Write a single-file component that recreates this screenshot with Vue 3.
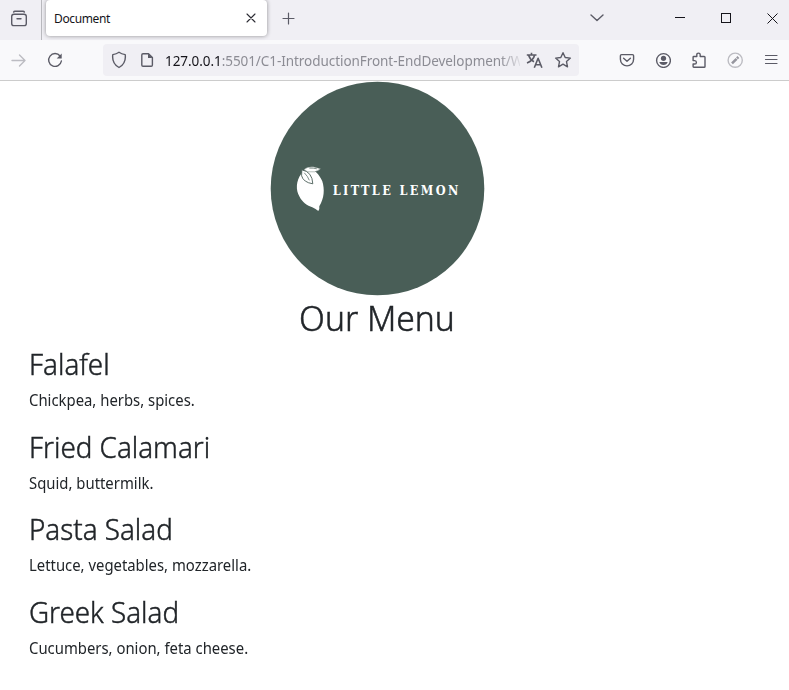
<script setup>
const dishes = [
  { key: 'falafel', name: 'Falafel', text: 'Chickpea, herbs, spices.' },
  { key: 'calamari', name: 'Fried Calamari', text: 'Squid, buttermilk.' },
  { key: 'pasta', name: 'Pasta Salad', text: 'Lettuce, vegetables, mozzarella.' },
  { key: 'greek', name: 'Greek Salad', text: 'Cucumbers, onion, feta cheese.' },
]
</script>

<template>
  <div class="window">
    <header class="tabs">
      <div class="view">
        <svg width="18" height="18" viewBox="0 0 18 18" class="ico">
          <path d="M3.6 2.1Q4 1.2 5 1.2h8q1 0 1.4.9" />
          <rect x="1.7" y="4.2" width="14.6" height="11.4" rx="2.2" />
          <path d="M7 8.8h4" />
        </svg>
      </div>
      <div class="tab">
        <span class="title">Document</span>
        <svg width="10" height="10" viewBox="0 0 10 10" class="ico dark thin"><path d="M1 1l8 8M9 1l-8 8" /></svg>
      </div>
      <svg width="13" height="13" viewBox="0 0 13 13" class="ico plus"><path d="M6.500 1v11M1 6.500h11" /></svg>
      <svg width="14" height="8" viewBox="0 0 14 8" class="ico list"><path d="M1 1l6 5.500L13 1" /></svg>
      <svg width="10" height="10" viewBox="0 0 10 10" class="ico win min" shape-rendering="crispEdges"><path d="M0 4.500h10" /></svg>
      <svg width="10" height="10" viewBox="0 0 10 10" class="ico win max" shape-rendering="crispEdges"><path d="M.5.5h9v9h-9z" /></svg>
      <svg width="11" height="11" viewBox="0 0 11 11" class="ico win"><path d="M.5.5l10 10M10.500.5l-10 10" /></svg>
    </header>

    <nav class="toolbar">
      <svg width="16" height="14" viewBox="0 0 16 14" class="ico faded fwd"><path d="M1 7.500h13M8.500 2L14 7.500l-5.500 5.500" /></svg>
      <svg width="16" height="16" viewBox="0 0 16 16" class="ico reload">
        <path d="M13.100 4A6.400 6.400 0 1 0 14.400 9" />
        <path class="solid" d="M14.700 1.500v5h-5z" />
      </svg>
      <div class="url">
        <svg width="16" height="18" viewBox="0 0 16 18" class="ico shield"><path d="M8 1.300Q10.500 3.200 14.200 3.600C15 9.500 12.500 14 8 16.500C3.500 14 1 9.500 1.800 3.600Q5.500 3.200 8 1.300z" /></svg>
        <svg width="14" height="16" viewBox="0 0 14 16" class="ico page">
          <path d="M3 1.700h5.500l3.900 3.900v7.500q0 1.200-1.200 1.200H3q-1.200 0-1.200-1.200V2.900q0-1.200 1.200-1.200z" />
          <path class="solid" d="M8 1.500v4.600h4.500z" />
        </svg>
        <span class="address"><b>127.0.0.1</b>:5501/C1-IntroductionFront-EndDevelopment/W</span>
        <svg width="17" height="17" viewBox="0 0 17 17" class="ico translate">
          <path d="M.8 3h9.700M5.500.8V3M8.600 3C7.900 6.500 5 9.300 1 11M2.700 3.500C3.800 6.800 6 8.700 8 9.800M8.300 15.700L12.100 6.300L15.900 15.700M9.700 12.800h4.800" />
        </svg>
        <svg width="18" height="18" viewBox="0 0 18 18" class="ico star"><path d="M9 1.700l2.200 4.800 5.200.600-3.900 3.500 1 5.200L9 13.200l-4.500 2.600 1-5.200L1.600 7.100l5.200-.600z" /></svg>
      </div>
      <div class="actions">
        <svg width="16" height="16" viewBox="0 0 16 16" class="ico">
          <path d="M2.600 2.600h10.800q1.200 0 1.200 1.200v3.500a6.600 6.600 0 0 1-13.200 0V3.800q0-1.200 1.200-1.200z" />
          <path d="M4.600 6.200L8 9.300l3.400-3.100" />
        </svg>
        <svg width="16" height="16" viewBox="0 0 16 16" class="ico">
          <circle cx="8.500" cy="8.500" r="6.900" />
          <circle class="solid" cx="8.500" cy="6.300" r="2.600" />
          <path class="solid" d="M4.300 10h8.400q-.9 3-4.200 3t-4.200-3z" />
        </svg>
        <svg width="16" height="16" viewBox="0 0 16 16" class="ico">
          <path d="M2.100 7V5.200q0-.7.700-.7h3V2.800q0-1.700 1.700-1.700t1.700 1.700v1.700h4q.8 0 .8.800v9.100q0 .8-.8.800H2.800q-.7 0-.7-.7v-2.500h1.600q1.700 0 1.700-1.600T3.700 8.600H2.100z" />
        </svg>
        <svg width="16" height="16" viewBox="0 0 16 16" class="ico faded">
          <circle cx="8.200" cy="8.200" r="7.100" />
          <path class="pen" d="M5 11.400l4.600-4.600M10 6.400l1.400-1.400" />
        </svg>
        <svg width="14" height="12" viewBox="0 0 14 12" class="ico menu"><path d="M1.500 1.500h11.500M1.500 5.500h11.500M1.500 9.500h11.500" /></svg>
      </div>
    </nav>

    <main class="content">
      <svg class="logo" width="216" height="216" viewBox="0 0 216 216">
        <circle cx="108.500" cy="107.500" r="106.800" fill="#495e57" />
        <g transform="translate(.3 .3)">
          <path fill="#fff" d="M32 92.500C26.500 100 26.500 109 30 115C33 121 38 124.500 43 126Q46.500 127.500 49 129.800Q50.500 128 50 125C55 117 55.500 108 53 100C50 93 45 88 39 87.500Q34 89 32 92.500z" />
          <path fill="#fff" stroke="#495e57" stroke-width=".4" d="M34.500 88.500Q37.500 85 44 85.500L51.500 87.500Q46 92 38.500 90.500z" />
          <path fill="#fff" stroke="#495e57" stroke-width=".9" d="M32.500 88.500Q43 90.500 43.500 102.500Q34 101 32.300 94.500z" />
          <path fill="none" stroke="#495e57" stroke-width=".7" d="M35 91.500Q38.500 95 40 99M40 86.800Q44 86.500 47.500 87.500" />
        </g>
        <text transform="translate(63.700 113.800) scale(.93 1)" textLength="135" class="brand">LITTLE LEMON</text>
      </svg>
      <h1><span>Our Menu</span></h1>
      <section v-for="dish in dishes" :key="dish.key" class="dish" :class="dish.key">
        <h2>{{ dish.name }}</h2>
        <p>{{ dish.text }}</p>
      </section>
    </main>
  </div>
</template>

<style>
body { margin: 0; background: #fff; overflow: hidden; }
</style>

<style scoped>
.window { width: 789px; height: 690px; overflow: hidden; background: #fff; font-family: "Noto Sans", "Open Sans", sans-serif; color: #212529; }
.ico { display: block; flex: none; fill: none; stroke: #5b5b66; stroke-width: 1.4; stroke-linecap: round; stroke-linejoin: round; }
.ico .solid { fill: #5b5b66; stroke: none; }
.dark { stroke: #2c2c34; }
.thin { stroke-width: 1.1; }
.faded { stroke: #bcbcc2; }
.pen { stroke: #96969e; stroke-width: 2.600; stroke-linecap: butt; }
.tabs { box-sizing: border-box; display: flex; align-items: center; height: 40px; padding-bottom: 4px; background: #f0eff4; }
.view { box-sizing: border-box; display: flex; align-items: center; width: 42px; height: 40px; margin-bottom: -4px; padding: 0 0 3px 10px; border-right: 1px solid #b9b9be; }
.tab { box-sizing: border-box; display: flex; align-items: center; justify-content: space-between; width: 221px; height: 36px; margin-left: 4px; padding: 0 11px 0 8px; background: #fff; border-radius: 4px; box-shadow: 0 0 4px rgba(0, 0, 0, .4); }
.title { font-size: 12px; line-height: 16px; letter-spacing: -.36px; color: #15141a; padding-top: 2px; }
.plus { margin-left: 15px; stroke-width: 1.2; }
.list { margin-left: 295px; }
.win { stroke: #15141a; stroke-width: 1; stroke-linecap: butt; margin-right: 7px; }
.min { margin: 0 36px 0 71px; }
.max { margin-right: 36px; }
.toolbar { box-sizing: border-box; display: flex; align-items: center; height: 41px; background: #f9f9fb; border-bottom: 1px solid #ccc; }
.fwd { margin-left: 11px; }
.reload { margin-left: 20px; }
.url { display: flex; align-items: center; width: 476px; height: 32px; margin-left: 40px; background: #f0eff4; border-radius: 4px; }
.shield { margin-left: 8px; }
.page { margin-left: 13px; }
.address { flex: none; width: 355px; padding-top: 2px; margin-left: 11px; white-space: nowrap; font-size: 13.5px; line-height: 20px; letter-spacing: -.06px; color: #8c8c94; -webkit-mask-image: linear-gradient(to right, #000 335px, transparent 359px); mask-image: linear-gradient(to right, #000 335px, transparent 359px); }
.address b { font-weight: 400; color: #15141a; }
.translate { margin-left: 6px; stroke-width: 1.6; stroke-linecap: butt; }
.star { margin-left: 11px; }
.actions { display: flex; align-items: center; gap: 20px; margin-left: 40px; }
.menu { stroke-width: 1.2; margin-left: 1px; }
.content { width: 696px; margin-left: 29px; }
.logo { display: block; margin: 0 auto; }
.brand { font-family: "DejaVu Serif", serif; font-size: 12.2px; font-weight: 700; fill: #fff; }
h1, h2, p { margin: 0; font-weight: 400; }
h1 { font-size: 35px; font-weight: 300; -webkit-text-stroke: .5px #212529; line-height: 42px; text-align: center; transform: scaleX(.961); }
.dish { height: 82.5px; }
h1 + .dish { margin-top: 8px; }
h2 { font-size: 29px; font-weight: 300; -webkit-text-stroke: .45px #212529; line-height: 34.500px; margin-bottom: 6.500px; white-space: nowrap; transform: scaleX(.957); transform-origin: 0 0; }
p { font-size: 16px; line-height: 24px; white-space: nowrap; transform: scaleX(.929); transform-origin: 0 0; }
</style>
